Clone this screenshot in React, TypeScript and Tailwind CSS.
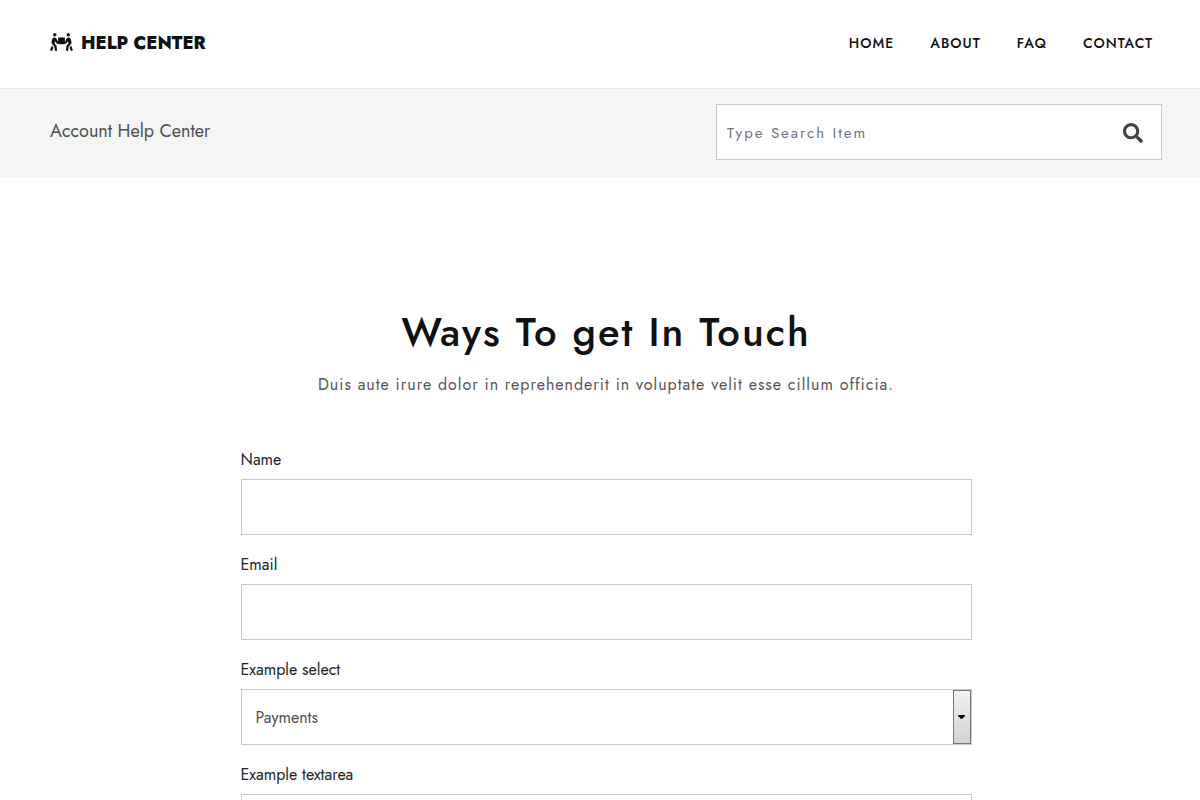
import React, { useState } from 'react';
import { FaPeopleCarry, FaSearch } from 'react-icons/fa';

const navLinks = [
  { label: 'HOME', href: '#home' },
  { label: 'ABOUT', href: '#about' },
  { label: 'FAQ', href: '#faq' },
  { label: 'CONTACT', href: '#contact' },
];

const topics = ['Payments', 'Account', 'Orders', 'Other'];

const fieldClass = 'block w-full h-14 border border-[#c8c8c8] bg-white px-[14px] text-base text-[#505050] outline-none';
const labelClass = 'block mb-[7px] text-base leading-6 text-[#212529]';

const Header: React.FC = () => (
  <header className="flex items-center justify-between h-[89px] border-b border-[#e8e8e8] pl-[50px] pr-[47px] pb-[2px]">
    <a href="#home" className="flex items-center gap-2 text-[#111]">
      <FaPeopleCarry className="w-[23px] h-5 pb-[2px]" />
      <span className="text-lg font-extrabold">HELP CENTER</span>
    </a>
    <nav className="flex gap-9">
      {navLinks.map((link) => (
        <a key={link.label} href={link.href} className="text-sm font-medium tracking-[1px] text-[#111]">
          {link.label}
        </a>
      ))}
    </nav>
  </header>
);

const SearchBar: React.FC = () => {
  const [query, setQuery] = useState('');

  return (
    <div className="flex items-center justify-between h-[88px] bg-[#f5f5f5] pl-[50px] pr-[38px] pb-[2px]">
      <h2 className="pb-[2px] text-lg text-[#505050]">Account Help Center</h2>
      <form
        onSubmit={(e) => e.preventDefault()}
        className="flex items-center w-[446px] h-14 border border-[#c8c8c8] bg-white pt-[2px]"
      >
        <input
          type="search"
          aria-label="Search"
          placeholder="Type Search Item"
          value={query}
          onChange={(e) => setQuery(e.target.value)}
          className="flex-1 min-w-0 h-full px-[10px] text-[15px] tracking-[2px] text-[#505050] placeholder:text-[#6c757d] outline-none"
        />
        <button type="submit" aria-label="Submit search" className="px-[18px] text-[#444]">
          <FaSearch className="w-5 h-5" />
        </button>
      </form>
    </div>
  );
};

const ContactForm: React.FC = () => {
  const [topic, setTopic] = useState(topics[0]);

  return (
    <form onSubmit={(e) => e.preventDefault()} className="flex flex-col gap-[18px] w-full max-w-[731px] mx-auto">
      <div>
        <label htmlFor="name" className={labelClass}>Name</label>
        <input id="name" type="text" className={fieldClass} />
      </div>
      <div>
        <label htmlFor="email" className={labelClass}>Email</label>
        <input id="email" type="email" className={fieldClass} />
      </div>
      <div>
        <label htmlFor="topic" className={labelClass}>Example select</label>
        <div className="relative">
          <select
            id="topic"
            value={topic}
            onChange={(e) => setTopic(e.target.value)}
            className={`${fieldClass} appearance-none pt-[2px]`}
          >
            {topics.map((t) => (
              <option key={t}>{t}</option>
            ))}
          </select>
          {/* Drop-down handle */}
          <span className="pointer-events-none absolute inset-y-px right-px flex items-center justify-center w-[18px] border border-[#777] bg-linear-to-b from-[#f2f2f2] to-[#d2d2d2]">
            <svg viewBox="0 0 7 4" className="w-[7px] h-1" fill="#000">
              <path d="M0 0h7v1L4 4H3L0 1z" />
            </svg>
          </span>
        </div>
      </div>
      <div>
        <label htmlFor="message" className={labelClass}>Example textarea</label>
        <textarea id="message" rows={3} className="block w-full h-28 border border-[#c8c8c8] bg-white p-3 text-base text-[#505050] outline-none" />
      </div>
    </form>
  );
};

export default function App() {
  return (
    <div className="h-screen overflow-hidden bg-white font-['Jost','Lato',sans-serif]">
      <Header />
      <SearchBar />
      <main className="pl-3 pt-[125px]">
        <h1 className="text-center text-[40px] leading-[60px] font-medium tracking-[2px] text-[#111]">
          Ways To get In Touch
        </h1>
        <p className="mt-[11px] mb-[51px] text-center text-base leading-6 tracking-[1px] text-[#555]">
          Duis aute irure dolor in reprehenderit in voluptate velit esse cillum officia.
        </p>
        <ContactForm />
      </main>
    </div>
  );
}
